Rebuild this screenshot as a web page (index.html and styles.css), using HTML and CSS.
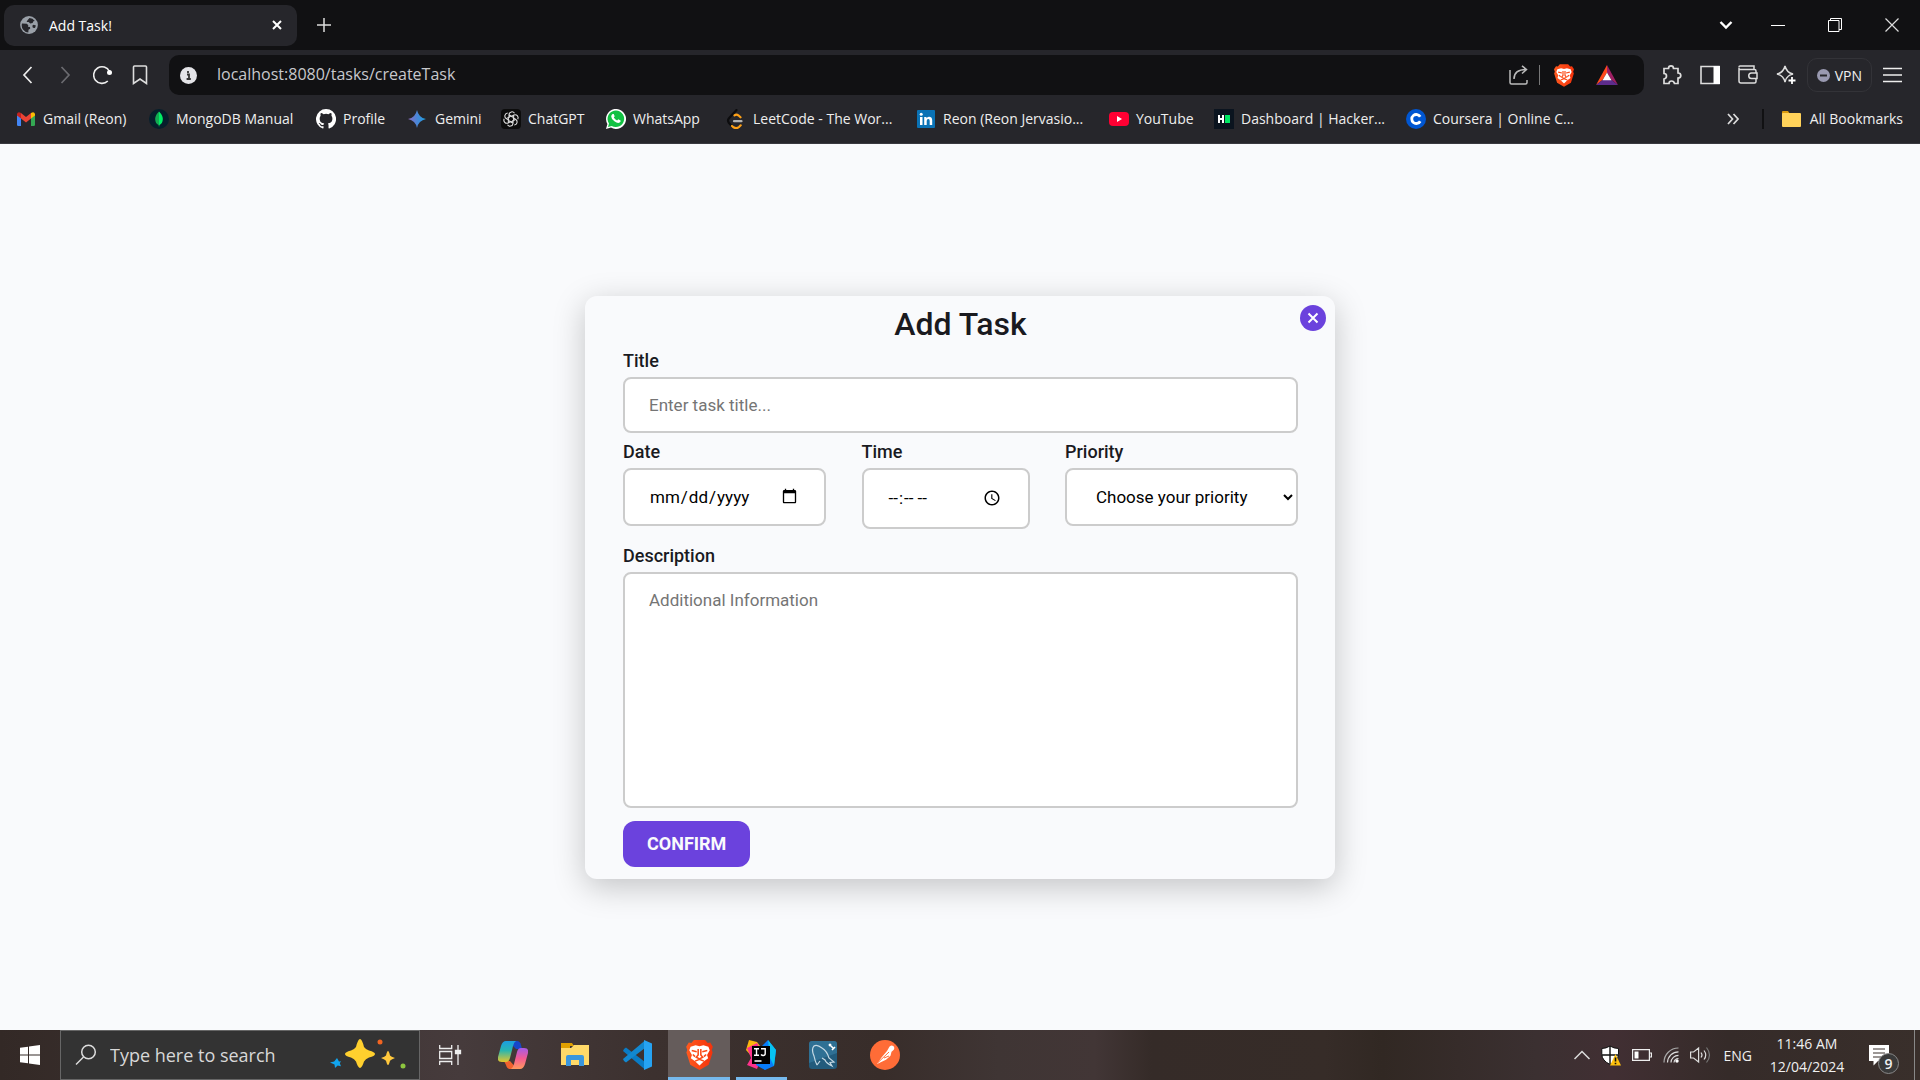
FILE: index.html
```html
<!DOCTYPE html>
<html lang="en">
<head>
<meta charset="utf-8">
<title>Add Task!</title>
<link rel="stylesheet" href="styles.css">
</head>
<body>
<svg class="defs" aria-hidden="true">
  <defs>
    <linearGradient id="lionFill" x1="0" x2="1"><stop offset="0" stop-color="#ff5a1f"/><stop offset="1" stop-color="#f4320b"/></linearGradient>
    <symbol id="lion" viewBox="0 0 24 27">
      <path fill="url(#lionFill)" d="M7 0h10l2.400 2.600 2.200-.3L24 6l-1 3 .8 2.200-3.500 11L12 27l-8.300-4.800L.2 11.200 1 9 0 6l2.400-3.700 2.200.3z"/>
      <path fill="#fff" d="M4 6l4.500-1.200L12 5.600l3.500-.8L20 6l1.200 3.200-2.400 4.300 1 3-3.800 2.700L12 23l-4-3.800-3.800-2.700 1-3L2.800 9.200z"/>
      <path fill="none" stroke="#fb4a16" stroke-width="1.400" d="M5 9.500l4.500 1M19 9.500l-4.500 1M10.800 8v5.500l-1.700 2 2.900 1.500 2.900-1.500-1.700-2V8M8 19l4-1.600 4 1.600M6 13l2 2M18 13l-2 2"/>
    </symbol>
  </defs>
</svg>
<div class="screen">
  <header class="browser">
    <div class="tabs">
      <div class="tab">
        <svg class="tab-icon" viewBox="0 0 18 18"><circle cx="9" cy="9" r="8.900" fill="#9aa0a8"/><path fill="#26262b" d="M2 7.500l4.800.2 1.500 1.500-.3 1.600 2 .2.2 1.800-1.700 1-.2 2.600A7 7 0 0 1 2 7.500zM7.500 4.300l2-2.300a7 7 0 0 1 5.300 3l-1.400.2-.8 1.800-2.300.6-1.700-1.500h-2z"/><path fill="#26262b" d="M15.900 9.500l-2.400-.7-1.200 1 .5 2 2.200.3z"/></svg>
        <span class="tab-title">Add Task!</span>
        <button class="plain" aria-label="Close tab"><svg width="10" height="10" viewBox="0 0 10 10"><path d="M1 1l8 8M9 1l-8 8" stroke="#fff" stroke-width="2"/></svg></button>
      </div>
      <button class="plain new-tab" aria-label="New tab"><svg width="14" height="14" viewBox="0 0 14 14"><path d="M7 0v14M0 7h14" stroke="#ddd" stroke-width="1.500"/></svg></button>
      <div class="window-controls">
        <button class="plain tab-search" aria-label="Search tabs"><svg width="14" height="10" viewBox="0 0 14 10"><path d="M1.500 2L7 7.500 12.500 2" fill="none" stroke="#fff" stroke-width="2.400"/></svg></button>
        <button class="plain" aria-label="Minimize"><svg width="14" height="14" viewBox="0 0 14 14"><path d="M0 7.500h14" stroke="#fff"/></svg></button>
        <button class="plain" aria-label="Restore"><svg width="14" height="14" viewBox="0 0 14 14"><path d="M.5 2.500h10.500v11H.5zM2.500 2.500v-2h11v11H11" fill="none" stroke="#fff"/></svg></button>
        <button class="plain" aria-label="Close"><svg width="14" height="14" viewBox="0 0 14 14"><path d="M.5.5l13 13M13.500.5l-13 13" stroke="#ddd" stroke-width="1.200"/></svg></button>
      </div>
    </div>
    <div class="toolbar">
      <div class="nav">
        <button class="plain" aria-label="Back"><svg width="20" height="20" viewBox="0 0 20 20"><path d="M14.500 2L7 10l7.500 8" fill="none" stroke="#eee" stroke-width="1.700"/></svg></button>
        <button class="plain" aria-label="Forward"><svg width="20" height="20" viewBox="0 0 20 20"><path d="M6.500 2L14 10l-7.500 8" fill="none" stroke="#6b6b70" stroke-width="1.700"/></svg></button>
        <button class="plain" aria-label="Reload"><svg width="20" height="20" viewBox="0 0 20 20"><path d="M16.500 6.500A8.300 8.300 0 1 0 14.800 16" fill="none" stroke="#eee" stroke-width="1.600"/><circle cx="16.500" cy="7.600" r="2.500" fill="#fff"/></svg></button>
        <button class="plain" aria-label="Bookmark"><svg width="20" height="20" viewBox="0 0 20 20"><path d="M3.500 1h11q1 0 1 1v16.500L9 14l-6.500 4.500V2q0-1 1-1z" fill="none" stroke="#ddd" stroke-width="1.600"/></svg></button>
      </div>
      <div class="address">
        <svg width="17" height="17" viewBox="0 0 17 17"><circle cx="8.500" cy="8.500" r="8.500" fill="#e4e4e8"/><path d="M7 7.500h2V12M6.600 12h4.200M8 4v2" stroke="#333" stroke-width="1.800" fill="none"/></svg>
        <input class="url" aria-label="Address" value="localhost:8080/tasks/createTask">
        <div class="address-icons">
          <svg width="20" height="20" viewBox="0 0 20 20" fill="none" stroke="#bbb" stroke-width="1.500"><path d="M1 5v12.500q0 1.500 1.500 1.500h14q1.500 0 1.500-1.500V15M5 14q0-9.500 12-9.500M13 .8l4.500 3.700L13 8.500"/></svg>
          <span class="bar"></span>
          <svg class="brave" width="20" height="23"><use href="#lion"/></svg>
          <svg width="22" height="20" viewBox="0 0 22 20"><path fill="#ff4a1c" d="M11 0v7.500L6.500 15 0 20z"/><path fill="#9e1f63" d="M11 0l11 20-6.500-5L11 7.500z"/><path fill="#5d2c8c" d="M0 20l6.500-5h9L22 20z"/><path fill="#fff" d="M11 7.500l4.500 7.800h-9z"/></svg>
        </div>
      </div>
      <div class="tools">
        <svg width="20" height="20" viewBox="0 0 20 20" fill="none" stroke="#ddd" stroke-width="1.700"><path d="M2 3.500h4.500Q6.500.9 9 .9t2.500 2.600H16V8q2.800 0 2.800 2.500T16 13v5.500h-3.500Q12 16 9.500 16T7 18.500H2V14q2.500-.5 2.500-3T2 8.500z"/></svg>
        <svg width="20" height="20" viewBox="0 0 20 20"><path d="M1 1.500h18v17H1z" fill="none" stroke="#ddd" stroke-width="1.600"/><path d="M13.500 1H20v18h-6.500z" fill="#fff"/></svg>
        <svg width="20" height="20" viewBox="0 0 20 20" fill="none" stroke="#ddd" stroke-width="1.500"><path d="M1 2q0-1 1-1h14v3.500M1 2.500V16q0 2 2 2h13.500q1.500 0 1.500-1.500v-3M1.500 4.500h15q1.500 0 1.500 1.500v2M19 8h-5.500a2.700 2.700 0 0 0 0 5.500H19z"/></svg>
        <svg width="20" height="20" viewBox="0 0 20 20" fill="none" stroke="#ddd" stroke-width="1.500"><path d="M9 1q1.500 6.500 8 8-3 .8-4.500 2-2.500 1.800-3.500 6-1.500-6.500-8-8 6.500-1.500 8-8z"/><path d="M16 12v7M12.500 15.500h7" stroke="#fff" stroke-width="1.800"/></svg>
        <button class="vpn"><svg width="13" height="13" viewBox="0 0 13 13"><circle cx="6.500" cy="6.500" r="6.500" fill="#9999b0"/><path d="M3 6.500h7" stroke="#26262b" stroke-width="2"/></svg>VPN</button>
        <svg width="19" height="16" viewBox="0 0 19 16"><path d="M0 1.500h19M0 8h19M0 14.500h19" stroke="#eee" stroke-width="1.600"/></svg>
      </div>
    </div>
    <nav class="bookmarks">
      <a href="#"><svg viewBox="0 0 20 20"><path fill="#4285f4" d="M1 5l4 3v9H2.200Q1 17 1 15.800z"/><path fill="#34a853" d="M19 5l-4 3v9h2.800q1.200 0 1.200-1.200z"/><path fill="#ea4335" d="M5 4l5 4 5-4v5.500l-5 4-5-4z"/><path fill="#c5221f" d="M1 6V4.800Q2 2 5 4v5.500L1 6.500z"/><path fill="#fbbc04" d="M19 6V4.800Q18 2 15 4v5.500l4-3z"/></svg>Gmail (Reon)</a>
      <a href="#"><svg viewBox="0 0 20 20"><circle cx="10" cy="10" r="10" fill="#061f2b"/><path fill="#00ed64" d="M10 2.500q4 4 3.800 8T10.500 16l-.5 2z"/><path fill="#13aa52" d="M10 2.500q-4 4-3.800 8T9.500 16l.5 2z"/></svg>MongoDB Manual</a>
      <a href="#"><svg viewBox="0 0 16 16"><path fill="#fff" d="M8 0a8 8 0 0 0-2.530 15.590c.4.070.55-.17.55-.38v-1.490c-2.010.37-2.530-.49-2.690-.94-.09-.23-.48-.94-.82-1.130-.28-.15-.68-.52-.01-.53.63-.01 1.080.58 1.230.82.720 1.210 1.870.87 2.330.66.070-.52.28-.87.510-1.070-1.780-.2-3.640-.89-3.640-3.950 0-.87.310-1.590.82-2.150-.08-.2-.36-1.020.08-2.120 0 0 .67-.21 2.200.82a7.400 7.400 0 0 1 4 0c1.530-1.040 2.200-.82 2.200-.82.440 1.100.16 1.920.08 2.120.51.560.82 1.270.82 2.150 0 3.070-1.870 3.750-3.650 3.950.29.250.54.730.54 1.480v2.200c0 .21.15.46.55.38A8 8 0 0 0 8 0z"/></svg>Profile</a>
      <a href="#"><svg viewBox="0 0 20 20"><defs><linearGradient id="gem"><stop offset="0" stop-color="#8f6cc0"/><stop offset=".5" stop-color="#4a86d8"/><stop offset="1" stop-color="#1ba1e3"/></linearGradient></defs><path fill="url(#gem)" d="M9 1q1.500 7.500 9 9-7.500 1.500-9 9-1.500-7.500-9-9 7.500-1.500 9-9z"/></svg>Gemini</a>
      <a href="#"><svg viewBox="0 0 20 20"><rect width="20" height="20" rx="4" fill="#0c0c0c"/><g fill="none" stroke="#ddd" stroke-width="1.100"><path id="petal" d="M8 9V5.500a3 3 0 0 1 5.500-1.300M8 5.800l4.500 2.600"/><use href="#petal" transform="rotate(60 10 10)"/><use href="#petal" transform="rotate(120 10 10)"/><use href="#petal" transform="rotate(180 10 10)"/><use href="#petal" transform="rotate(240 10 10)"/><use href="#petal" transform="rotate(300 10 10)"/></g></svg>ChatGPT</a>
      <a href="#"><svg viewBox="0 0 20 20"><path fill="#fff" d="M0 20l1.400-5A10 10 0 1 1 5 18.600z"/><path fill="#12c143" d="M2 18l1-3.500A8.300 8.300 0 1 1 5.700 17z"/><path fill="#fff" d="M6.500 5h1.200l1 2.300-.9 1.300q1.200 2.200 3.300 3l1.200-1.300 2.300 1.100q.3 1.500-1 2.200-2 1-5.200-1.300T5.200 7.500Q5.200 6 6.500 5z"/></svg>WhatsApp</a>
      <a href="#"><svg viewBox="0 0 20 20" fill="none" stroke-width="2.200" stroke-linecap="round"><path stroke="#0c0c0e" d="M10.500 1L3 9.200q-2 2.300 0 4.800l3 3.200"/><path stroke="#ffa116" d="M8.500 6.300q2-1.500 3.800 0l2.200 2M6 17l1.500 1.300q3 1.700 5.500-.3l1.700-1.700"/><path stroke="#b3b3b3" d="M8 12.200h7.500"/></svg>LeetCode - The Wor...</a>
      <a href="#"><svg viewBox="0 0 20 20"><rect x="1" y="1" width="18" height="18" rx="1" fill="#0a72b5"/><path fill="#fff" d="M4 8h2.500v8H4zM8.200 8h2.300v1.200q2.200-2.300 4.800-.7.900.9.900 2.800V16h-2.500v-4.300q0-1.700-1.400-1.700-1.600 0-1.600 1.900V16H8.200z"/><circle cx="5.200" cy="5.300" r="1.500" fill="#fff"/></svg>Reon (Reon Jervasio...</a>
      <a href="#"><svg viewBox="0 0 20 20"><rect y="3" width="20" height="14" rx="4" fill="#ff0033"/><path fill="#fff" d="M8 7l5 3-5 3z"/></svg>YouTube</a>
      <a href="#"><svg viewBox="0 0 20 20"><path fill="#0b141f" d="M0 0h20v20H0z"/><path fill="#fff" d="M4 6h2v3h2V6h2v8H8v-3H6v3H4z"/><path fill="#00ea64" d="M11 6h5v8h-5z"/></svg>Dashboard | Hacker...</a>
      <a href="#"><svg viewBox="0 0 20 20"><circle cx="10" cy="10" r="10" fill="#0056d2"/><path d="M14.200 12.200A4.500 4.500 0 1 1 14.200 7.800" fill="none" stroke="#fff" stroke-width="2.800"/></svg>Coursera | Online C...</a>
      <div class="bookmarks-end">
        <svg class="more" viewBox="0 0 12 12"><path d="M1 1l4.500 5L1 11M6.500 1L11 6l-4.500 5" fill="none" stroke="#ddd" stroke-width="1.700"/></svg>
        <span class="bar dark"></span>
        <a href="#"><svg viewBox="0 0 20 20"><path fill="#d99a10" d="M0 3q0-1 1-1h5l2 3H0z"/><rect y="4" width="19" height="14" rx="1" fill="#ffd25a"/></svg>All Bookmarks</a>
      </div>
    </nav>
  </header>

  <main class="page">
    <form class="card">
      <button type="button" class="close" aria-label="Close"><svg width="12" height="12" viewBox="0 0 12 12"><path d="M1.500 1.500l9 9M10.500 1.500l-9 9" stroke="#fff" stroke-width="2"/></svg></button>
      <h1>Add Task</h1>
      <div class="field">
        <label for="title">Title</label>
        <input id="title" type="text" placeholder="Enter task title...">
      </div>
      <div class="row">
        <div class="field date"><label for="date">Date</label><input id="date" type="date"></div>
        <div class="field time"><label for="time">Time</label><input id="time" type="time"></div>
        <div class="field priority"><label for="priority">Priority</label>
          <select id="priority"><option>Choose your priority</option></select></div>
      </div>
      <div class="field">
        <label for="description">Description</label>
        <textarea id="description" placeholder="Additional Information"></textarea>
      </div>
      <button type="button" class="confirm">CONFIRM</button>
    </form>
  </main>

  <footer class="taskbar">
    <button class="plain start" aria-label="Start"><svg width="20" height="20" viewBox="0 0 20 20"><path fill="#fff" d="M0 2.800l8-1.100v7.800H0zM9 1.500L20 0v9.500H9zM0 10.500h8v7.800l-8-1.100zM9 10.500h11V20L9 18.500z"/></svg></button>
    <div class="search">
      <svg width="22" height="22" viewBox="0 0 22 22" fill="none" stroke="#ddd" stroke-width="1.500"><circle cx="13.500" cy="8" r="6.800"/><path d="M8.500 13L1 20.500"/></svg>
      <input aria-label="Search" placeholder="Type here to search">
      <svg width="76" height="34" viewBox="0 0 76 34"><path fill="#12a5ee" d="M7 20l2 3.500 2-.3-1.200 2 1.200 3-3.300-.6L5 30l-.5-3.500L0 24.500l4.200-1z"/><path fill="#ffd02e" d="M30 1q2 0 4 8 1.500 2 5 3.500 6 1.500 6 3.500t-6 3.500q-3.500 1.500-5 4-2 6.500-4 6.500t-4-6.500q-1.500-2.500-5-4-6-1.500-6-3.500t6-3.500q3.500-1.500 5-3.500 2-8 4-8z"/><path fill="#ffc83d" d="M58 13q1 0 2 4.500 1 1 5 2.500-4 1.500-5 2.800Q59 27 58 27t-2-4.200Q55 21.500 51 20q4-1.500 5-2.500Q57 13 58 13z"/><circle cx="50" cy="4" r="2.500" fill="#f26522"/><circle cx="73" cy="28" r="2.500" fill="#8dc63f"/></svg>
    </div>
    <div class="apps">
      <button class="app" aria-label="Task view"><svg width="24" height="20" viewBox="0 0 24 20" fill="none" stroke="#eee" stroke-width="1.300"><path d="M.7 0v3.500h12V0M.7 20v-3.500h12V20M.7 6.500h12v7H.7zM19 0v20"/><path d="M16.500 5.500h5v3h-5z" fill="#eee"/></svg></button>
      <button class="app" aria-label="Copilot"><svg width="30" height="28" viewBox="0 0 30 28"><defs><linearGradient id="cpA" x2="0" y2="1"><stop offset="0" stop-color="#1b9de2"/><stop offset=".45" stop-color="#29b6b0"/><stop offset="1" stop-color="#e5c52b"/></linearGradient><linearGradient id="cpB" x2="0" y2="1"><stop offset="0" stop-color="#a45be8"/><stop offset=".5" stop-color="#f45b93"/><stop offset="1" stop-color="#ff9a5c"/></linearGradient></defs><path fill="#1746c9" d="M10 0h9q3 0 4 4l1 4h-6z"/><path fill="#f0622e" d="M6 20h6l7 8h-7q-3 0-4-4z"/><path fill="url(#cpA)" d="M8 0h10q-2 1-3 5l-3 12q-1 4-4 4H4q-5 0-4-5L3 5q1.500-5 5-5z"/><path fill="url(#cpB)" d="M22 28H13q2-1 3-5l3-12q1-4 4-4h3q5 0 4 5l-3 11q-1.500 5-5 5z"/></svg></button>
      <button class="app" aria-label="File Explorer"><svg width="28" height="24" viewBox="0 0 28 24"><path fill="#e0a000" d="M0 0h11l2 3h-4v3H0z"/><path fill="#ffd968" d="M0 5h10l3-3h15v20H0z"/><path fill="#3a96dd" d="M5 23V14q0-2 2-2h14q2 0 2 2v9h-5v-6h-8v6z"/></svg></button>
      <button class="app" aria-label="Visual Studio Code"><svg width="30" height="30" viewBox="0 0 30 30"><path fill="#0a7bc4" d="M2 9l2-1.500L23 22v7.500L1 11z"/><path fill="#1288d0" d="M2 21l2 1.500L23 8V.5L1 19z"/><path fill="#26a3f2" d="M22 0l8 3.500v23L22 30z"/></svg></button>
      <button class="app active" aria-label="Brave"><svg width="27" height="30"><use href="#lion"/></svg></button>
      <button class="app open" aria-label="IntelliJ IDEA"><svg width="30" height="30" viewBox="0 0 30 30"><path fill="#fdb60d" d="M3 0l8 2 6 8-10 8-7-8z"/><path fill="#ff318c" d="M1 8l10-5 6 10-6 16-10-4 4-7z"/><path fill="#087cfa" d="M16 6l6-6 8 10-2 16-9 4-9-5z"/><path fill="#07c3f2" d="M22 0l8 10-2 16-4-8z"/><path fill="#087cfa" d="M11 22h13l-5 8z"/><path d="M6 6h18v18H6z"/><path d="M8 8.700h5M10.500 8.700v6.600M8 15.300h5M15 8.700h4.200v4.800q0 2-2 2-1.300 0-2.200-1M8.500 21h7" stroke="#fff" stroke-width="1.400" fill="none"/></svg></button>
      <button class="app" aria-label="MySQL Workbench"><svg width="28" height="28" viewBox="0 0 28 28"><rect width="28" height="28" rx="3" fill="#225b7c"/><path fill="#397fa5" d="M3 0h22q3 0 3 3v9L0 22V3q0-3 3-3z" opacity=".6"/><path d="M8 24q-2-4-3-9Q2 8 5 5q3-2 8 2 5 3 7 10l5 4-4 .5 2 3.500q-6-3-7-6l-3-2M8 24l3-4" fill="none" stroke="#c5d9e4" stroke-width="1.200"/><path d="M20 3l5 5M20 5l2-2M23 9l3-3" stroke="#fff" stroke-width="1.600"/></svg></button>
      <button class="app" aria-label="Postman"><svg width="30" height="30" viewBox="0 0 30 30"><circle cx="15" cy="15" r="15" fill="#ff6c37"/><path fill="#fff" d="M19 7.500a2.700 2.700 0 1 1 4 3l-1.500 1.300-1 4-4.500 4-9 4.200 4.500-6.500L17 11z"/><path d="M8 22.500l11-10.500M14 18l5-2" stroke="#ff6c37"/></svg></button>
    </div>
    <div class="tray">
      <svg width="16" height="10" viewBox="0 0 16 10"><path d="M.5 9L8 1.500 15.500 9" fill="none" stroke="#ddd" stroke-width="1.500"/></svg>
      <svg width="20" height="21" viewBox="0 0 20 21"><path d="M9 1q4 2.500 8.500 2.500v6Q17 15.500 9 19.500 1 15.500.8 9.500v-6Q5 3.500 9 1z" fill="#fff" stroke="#111"/><path d="M9 1v18M1 10h16.500" stroke="#111" stroke-width="1.400"/><path fill="#ffc20e" d="M14.500 9L20 20.500H9z"/><path d="M14.500 12.500v4M14.500 17.700v1.500" stroke="#111" stroke-width="1.600"/></svg>
      <svg width="20" height="12" viewBox="0 0 20 12"><path d="M.6.600h16.800v10.800H.6zM18 4h1.400v4H18" fill="none" stroke="#eee" stroke-width="1.200"/><path fill="#fff" d="M2.500 2.500h4v7h-4z"/></svg>
      <svg width="16" height="16" viewBox="0 0 16 16" fill="none" stroke="#aaa" stroke-width="1.200"><path d="M1 15.500A14.500 14.500 0 0 1 15.500 1"/><path d="M4.500 15.500A11 11 0 0 1 15.500 4.800M8 15.500a7.500 7.500 0 0 1 7.500-7.200M11 15.500a4.500 4.500 0 0 1 4.500-4" stroke="#ddd"/><circle cx="14" cy="14" r="1.700" fill="#fff" stroke="none"/></svg>
      <svg width="21" height="18" viewBox="0 0 21 18" fill="none" stroke="#ddd" stroke-width="1.200"><path d="M.6 6v6h3l5 4V2l-5 4zM11 6.500q2 2.500 0 5M14 4.500q3.500 4.500 0 9"/><path d="M16.500 1.500q6 7.500 0 15" stroke="#777"/></svg>
      <span class="lang">ENG</span>
      <div class="clock"><span>11:46 AM</span><span>12/04/2024</span></div>
      <button class="plain notes" aria-label="Notifications"><svg width="20" height="21" viewBox="0 0 20 21"><path fill="#fff" d="M0 0h20v16H9l-4.500 4.500V16H0z"/><path d="M4 4h12M4 8h12M4 12h8" stroke="#3a302d" stroke-width="1.200"/></svg><span class="badge">9</span></button>
      <span class="peek"></span>
    </div>
  </footer>
</div>
</body>
</html>
```
FILE: styles.css
```css
* { box-sizing: border-box; }
body { margin: 0; font-family: "Open Sans", "Noto Sans", sans-serif; color: #f0f0f0; }
button, input, select, textarea { font-family: inherit; color: inherit; }
.defs { position: absolute; width: 0; height: 0; }
svg { flex: none; display: block; }
.plain { display: flex; align-items: center; justify-content: center; padding: 0; border: 0; background: none; }
.screen { min-height: 100vh; display: flex; flex-direction: column; }

/* Browser chrome */
.browser { background: #26262b; border-bottom: 1px solid #39393f; }
.tabs { display: flex; align-items: center; height: 50px; padding-left: 4px; background: #111113; }
.tab { display: flex; align-items: center; gap: 11px; width: 293px; height: 41px; padding: 0 15px 0 16px; border-radius: 10px; background: #26262b; }
.tab-icon { width: 18px; height: 18px; }
.tab-title { flex: 1; font-size: 14px; color: #fff; }
.new-tab { margin-left: 20px; }
.window-controls { display: flex; margin-left: auto; }
.window-controls button { width: 57px; }
.window-controls .tab-search { width: 46px; }
.toolbar { display: flex; align-items: center; height: 50px; padding-right: 18px; }
.nav { display: flex; gap: 18px; width: 169px; padding-left: 17px; }
.address { flex: 1; display: flex; align-items: center; height: 40px; padding: 0 26px 0 11px; border-radius: 10px; background: #111113; }
.url { flex: 1; padding: 0 0 2px 20px; border: 0; background: none; font-size: 16px; color: #c8c8cc; outline: 0; }
.address-icons { display: flex; align-items: center; gap: 10px; }
.address-icons .brave { margin: 0 12px 0 4px; }
.bar { width: 1px; height: 20px; background: #777; }
.bar.dark { width: 2px; background: #111113; }
.tools { display: flex; align-items: center; gap: 18px; padding-left: 18px; }
.vpn { display: flex; align-items: center; gap: 5px; height: 34px; margin: 0 -7px; padding: 0 9px; border: 1px solid #333338; border-radius: 10px; background: none; font-size: 14px; }
.bookmarks { display: grid; grid-template-columns: 133px 167px 92px 93px 105px 120px 190px 193px 105px 192px 180px 1fr; align-items: center; height: 43px; padding: 0 17px 6px 16px; }
.bookmarks a { display: flex; align-items: center; gap: 7px; color: #eee; font-size: 14px; text-decoration: none; white-space: nowrap; }
.bookmarks a svg { width: 20px; height: 20px; }
.bookmarks-end { display: flex; align-items: center; justify-content: flex-end; }
.more { width: 12px; height: 12px; margin-right: 23px; }
.bookmarks-end a { margin-left: 18px; gap: 8px; }

/* Task form */
.page { flex: 1; display: flex; align-items: center; justify-content: center; background: #f9fafc; font-family: Roboto, sans-serif; color: #1a1a1f; }
.card { position: relative; width: 750px; max-width: 100%; padding: 8px 37px 12px 38px; border-radius: 12px; background: #f9fafc; box-shadow: 0 8px 32px rgba(0, 0, 0, .22); }
.card h1 { margin: 0; font-size: 32px; line-height: 40px; font-weight: 500; text-align: center; }
.close { position: absolute; top: 9px; right: 9px; display: grid; place-items: center; width: 26px; height: 26px; padding: 0; border: 0; border-radius: 50%; background: #6b42dd; }
.field { display: flex; flex-direction: column; }
.field label { padding: 5px 0; font-size: 18px; line-height: 23px; font-weight: 500; }
.field input, .field select, .field textarea { width: 100%; height: 58px; margin: 0; padding: 0 24px; border: 2px solid #ccc; border-radius: 8px; background: #fff; font-size: 17px; color: #000; }
.field input[type="text"] { height: 56px; }
.field select { padding: 0 25px; }
.field input::placeholder, .field textarea::placeholder { color: #757575; }
.row { display: flex; align-items: flex-start; justify-content: space-between; padding: 2px 0 10px; }
.date { width: 203px; }
.time { width: 168px; }
.priority { width: 233px; }
.field input[type="time"] { height: 61px; }
.field textarea { height: 236px; padding: 16px 24px; resize: none; }
.confirm { height: 46px; margin-top: 13px; padding: 0 24px; border: 0; border-radius: 12px; background: #6b42dd; font-size: 18px; font-weight: 700; color: #f9fafc; }

/* Taskbar */
.taskbar { display: flex; height: 50px; background: linear-gradient(90deg, #332926 0, #463b3c 24%, #3c312f 34%, #382d2a 46%, #3f3534 52%, #423636 57%, #352b28 60%, #362c28 69%, #312823 72%, #3b3031 80%, #412f33 84%, #352b29 90%, #392f2b 100%); }
.start { width: 60px; }
.search { display: flex; align-items: center; width: 360px; padding: 0 13px 0 14px; border: 1px solid #666; background: #333; }
.search input { flex: 1; min-width: 0; padding: 0 0 0 13px; border: 0; background: none; font-size: 18px; }
.search input::placeholder { color: #d8d8d8; }
.apps { display: flex; }
.app { display: grid; place-items: center; width: 62px; padding: 0; border: 0; background: none; }
.app.active { border-top: 3px solid transparent; border-bottom: 3px solid #76b9ed; background: #655c5b; }
.app.open { background: linear-gradient(#76b9ed, #76b9ed) center bottom / 51px 3px no-repeat; }
.tray { display: flex; align-items: center; gap: 11px; margin-left: auto; }
.lang { margin-left: 2px; font-size: 14px; }
.clock { display: flex; flex-direction: column; width: 82px; margin-left: 3px; font-size: 14px; line-height: 23px; text-align: center; white-space: nowrap; }
.notes { position: relative; margin-left: 10px; }
.badge { position: absolute; left: 9px; top: 8px; width: 21px; height: 21px; border: 1px solid #888; border-radius: 50%; background: #3a3a3a; font-size: 14px; font-weight: 600; line-height: 19px; text-align: center; }
.peek { align-self: stretch; width: 1px; margin: 0 5px 0 14px; background: #888; }
```
